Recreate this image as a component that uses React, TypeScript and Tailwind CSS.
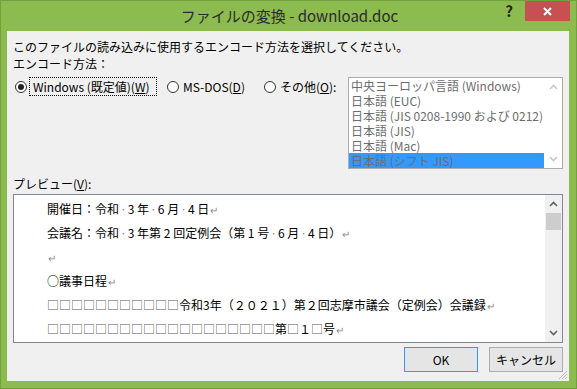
import React from 'react'

const Dot = () => <span className="text-[#8a8a8a] mx-[1px]">·</span>
const Ret = () => <span className="text-[#8a8a8a] text-[10px] ml-[1px]">↵</span>
const Boxes = ({ n }: { n: number }) => (
  <span className="text-[#5a5a5a]">{'□'.repeat(n)}</span>
)

function Radio({ checked }: { checked?: boolean }) {
  return (
    <span className="w-[12px] h-[12px] rounded-full border border-[#333] bg-white flex items-center justify-center shrink-0">
      {checked && <span className="w-[6px] h-[6px] rounded-full bg-[#222]" />}
    </span>
  )
}

function Chevron({ up, light }: { up?: boolean; light?: boolean }) {
  return (
    <svg width="9" height="6" viewBox="0 0 9 6">
      <path
        d={up ? 'M1 5 L4.5 1.5 L8 5' : 'M1 1 L4.5 4.5 L8 1'}
        fill="none"
        stroke={light ? '#c8c8c8' : '#606060'}
        strokeWidth="1.6"
      />
    </svg>
  )
}

const encodings = [
  '中央ヨーロッパ言語 (Windows)',
  '日本語 (EUC)',
  '日本語 (JIS 0208-1990 および 0212)',
  '日本語 (JIS)',
  '日本語 (Mac)',
  '日本語 (シフト JIS)',
]

export default function App() {
  return (
    <div className="w-[577px] h-[389px] bg-[#8cbb4f] border border-[#74a040] flex flex-col overflow-hidden font-['Noto_Sans_CJK_JP','Liberation_Sans',sans-serif] text-[12px] text-black">
      {/* title bar */}
      <div className="h-[30px] relative flex items-center justify-center">
        <span className="text-[15px] text-[#2b2b2b] pl-[2px]">ファイルの変換 - download.doc</span>
        <div className="absolute right-[6px] top-0 flex items-start">
          <span className="w-[20px] h-[20px] flex items-center justify-center text-[15px] font-bold text-[#222] mr-[6px]">?</span>
          <span className="w-[45px] h-[20px] bg-[#c75050] flex items-center justify-center">
            <svg width="9" height="9" viewBox="0 0 9 9">
              <path d="M1 1 L8 8 M8 1 L1 8" stroke="white" strokeWidth="2" />
            </svg>
          </span>
        </div>
      </div>

      {/* client area */}
      <div className="ml-[6px] w-[562px] h-[350px] bg-[#f0f0f0] px-[6px] flex flex-col relative">
        <div className="mt-[7px] h-[17px] leading-[17px]">
          このファイルの読み込みに使用するエンコード方法を選択してください。
        </div>
        <div className="h-[17px] leading-[17px]">エンコード方法：</div>

        <div className="mt-[5px] flex items-start">
          <div className="flex items-center h-[19px]">
            <span className="ml-[2px]"><Radio checked /></span>
            <span className="ml-[2px] w-[128px] h-[19px] border border-dotted border-black pl-[3px] leading-[17px]">
              Windows (既定値)(<span className="underline">W</span>)
            </span>
            <span className="ml-[10px]"><Radio /></span>
            <span className="ml-[4px] w-[81px] leading-[17px]">
              MS-DOS(<span className="underline">D</span>)
            </span>
            <Radio />
            <span className="ml-[4px] leading-[17px]">
              その他(<span className="underline">O</span>):
            </span>
          </div>

          <div className="ml-auto w-[215px] h-[92px] border border-[#adadad] bg-white flex">
            <div className="w-[195px] overflow-hidden">
              {encodings.map((e, i) => (
                <div
                  key={e}
                  className={`h-[15px] leading-[15px] pl-[2px] whitespace-nowrap text-[#6d6d6d] ${i === 5 ? 'bg-[#3399ff]' : ''}`}
                >
                  {e}
                </div>
              ))}
            </div>
            <div className="flex-1 flex flex-col items-center justify-between py-[6px]">
              <Chevron up light />
              <Chevron light />
            </div>
          </div>
        </div>

        <div className="mt-[6px] h-[17px] leading-[17px]">
          プレビュー(<span className="underline">V</span>):
        </div>

        <div className="mt-[2px] h-[149px] border border-[#828790] bg-white flex">
          <div className="flex-1 pl-[33px] pt-[2px] font-['Noto_Sans_CJK_JP',sans-serif] text-[12px] whitespace-nowrap overflow-hidden">
            <div className="h-[24px] leading-[24px]">
              開催日：令和<Dot />3 年<Dot />6 月<Dot />4 日<Ret />
            </div>
            <div className="h-[24px] leading-[24px]">
              会議名：令和<Dot />3 年第 2 回定例会（第 1 号<Dot />6 月<Dot />4 日）<Ret />
            </div>
            <div className="h-[24px] leading-[24px]">
              <Ret />
            </div>
            <div className="h-[24px] leading-[24px]">
              ○議事日程<Ret />
            </div>
            <div className="h-[24px] leading-[24px]">
              <Boxes n={11} />令和3年（２０２１）第２回志摩市議会（定例会）会議録<Ret />
            </div>
            <div className="h-[24px] leading-[24px]">
              <Boxes n={19} />第<Boxes n={1} />１<Boxes n={1} />号<Ret />
            </div>
          </div>
          <div className="w-[17px] bg-[#f0f0f0] flex flex-col items-center">
            <div className="h-[18px] flex items-center justify-center">
              <Chevron up />
            </div>
            <div className="w-[15px] h-[17px] bg-[#cdcdcd]" />
            <div className="flex-1" />
            <div className="h-[18px] flex items-center justify-center">
              <Chevron />
            </div>
          </div>
        </div>

        <div className="mt-[4px] flex justify-end gap-[11px]">
          <button className="w-[74px] h-[25px] border border-[#3399ff] bg-[#e5e5e5] text-[12px] text-black">
            OK
          </button>
          <button className="w-[74px] h-[25px] border border-[#acacac] bg-[#e5e5e5] text-[12px] text-black">
            キャンセル
          </button>
        </div>

        <svg className="absolute right-[1px] bottom-[1px]" width="11" height="11" viewBox="0 0 11 11">
          <path d="M10 2 L2 10 M10 5 L5 10 M10 8 L8 10" stroke="#b8b8b8" strokeWidth="1" />
        </svg>
      </div>
    </div>
  )
}
